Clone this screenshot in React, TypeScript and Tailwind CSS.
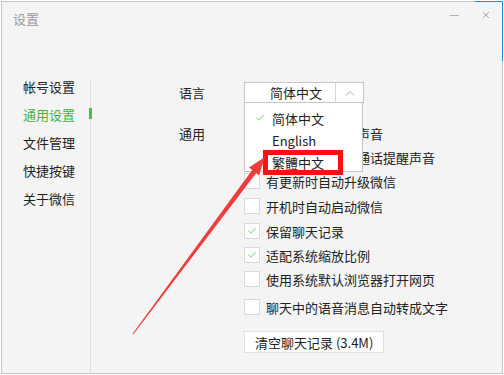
import { Check } from 'lucide-react';

const MENU = ['帐号设置', '通用设置', '文件管理', '快捷按键', '关于微信'];

const OPTIONS = [
  { label: '开启新消息提醒声音', checked: true, cls: '' },
  { label: '开启语音和视频通话提醒声音', checked: true, cls: '' },
  { label: '有更新时自动升级微信', checked: false, cls: '' },
  { label: '开机时自动启动微信', checked: false, cls: 'mt-[1px]' },
  { label: '保留聊天记录', checked: true, cls: 'mt-[1px]' },
  { label: '适配系统缩放比例', checked: true, cls: '' },
  { label: '使用系统默认浏览器打开网页', checked: false, cls: '' },
  { label: '聊天中的语音消息自动转成文字', checked: false, cls: 'mt-[4px]' },
];

function Checkbox({ checked }: { checked: boolean }) {
  return (
    <div className="w-4 h-4 border border-[#dadada] bg-white flex items-center pl-[2px]">
      {checked && <Check size={10} strokeWidth={2} className="text-[#52bd52]" />}
    </div>
  );
}

function LangSelect() {
  return (
    <div className="relative w-[120px] h-[21px] border border-[#c6c6c6] bg-white flex">
      <div className="flex-1 flex items-center pl-[25px] text-[#222]">简体中文</div>
      <div className="w-[28px] border-l border-[#d4d4d4] flex items-center justify-center">
        <svg width="10" height="6" viewBox="0 0 10 6">
          <path d="M1 5.5 L5 1.5 L9 5.5" fill="none" stroke="#a8a8a8" strokeWidth="1" />
        </svg>
      </div>

      {/* open dropdown */}
      <div className="absolute left-[-1px] top-[19px] w-[119px] h-[70px] border border-[#c6c6c6] bg-white z-10 pt-[4px]">
        <div className="h-[22px] flex items-center">
          <span className="w-[27px] flex justify-end pr-[7px]">
            <Check size={10} strokeWidth={2} className="text-[#52bd52]" />
          </span>
          <span>简体中文</span>
        </div>
        <div className="h-[22px] flex items-center pl-[27px]">English</div>
        <div className="h-[22px] flex items-center pl-[27px]">繁體中文</div>
        <div className="absolute left-[18px] top-[47px] w-[80px] h-[25px] border-[5px] border-[#ff1010]" />
      </div>
    </div>
  );
}

export default function App() {
  return (
    <div className="relative w-[504px] h-[375px] bg-white overflow-hidden font-['Noto_Sans_CJK_SC','Noto_Sans',sans-serif] text-[13px] leading-none text-[#222]">
      <div className="relative ml-[1px] mt-[1px] w-[502px] h-[373px] border border-[#c4c4c4] bg-[#f4f4f4] flex flex-col">
        <div className="absolute top-[-1px] right-[-1px] w-[28px] h-[60px] border-t border-r border-[#2b88d8]" />

        {/* title bar */}
        <div className="h-[70px] flex items-start justify-between">
          <div className="h-[32px] flex items-center pl-[11px] text-[#9c9c9c]">设置</div>
          <div className="flex items-center h-[26px] pr-[12px]">
            <div className="w-[9px] h-px bg-[#b4b4b4]" />
            <svg className="ml-[23px]" width="8" height="8" viewBox="0 0 8 8">
              <path d="M1 1 L7 7 M7 1 L1 7" stroke="#a8a8a8" strokeWidth="1" />
            </svg>
          </div>
        </div>

        <div className="flex-1 flex">
          {/* sidebar */}
          <div className="w-[88px] flex flex-col">
            {MENU.map((m, i) => (
              <div key={m} className={`relative h-[28px] flex items-center pl-[21px] ${i === 1 ? 'text-[#3fb53f]' : ''}`}>
                {m}
                {i === 1 && <div className="absolute left-[87px] top-[8px] w-[3px] h-[11px] bg-[#46c046]" />}
              </div>
            ))}
          </div>
          <div className="w-px mt-[8px] bg-[#dedede]" />

          {/* main */}
          <div className="flex-1 pl-[88px] pt-[10px]">
            <div className="flex items-center h-[21px]">
              <span className="w-[65px]">语言</span>
              <LangSelect />
            </div>

            <div className="flex mt-[18px]">
              <span className="w-[65px] h-6 flex items-center">通用</span>
              <div className="flex flex-col">
                {OPTIONS.map(o => (
                  <div key={o.label} className={`h-6 flex items-center gap-[6px] ${o.cls}`}>
                    <Checkbox checked={o.checked} />
                    <span>{o.label}</span>
                  </div>
                ))}
                <button className="mt-[12px] self-start h-[22px] px-[10px] bg-white border border-[#e2e2e2] text-[#222]">
                  清空聊天记录 (3.4M)
                </button>
              </div>
            </div>
          </div>
        </div>
      </div>

      {/* annotation arrow */}
      <svg className="absolute left-0 top-0 pointer-events-none z-20" width="504" height="375" viewBox="0 0 504 375">
        <polygon
          points="133.4,334.3 256.2,172.9 259,175.5 265,157 249,167.5 252.2,169.9 132.6,333.7"
          fill="#f23c3c"
        />
      </svg>
    </div>
  );
}
